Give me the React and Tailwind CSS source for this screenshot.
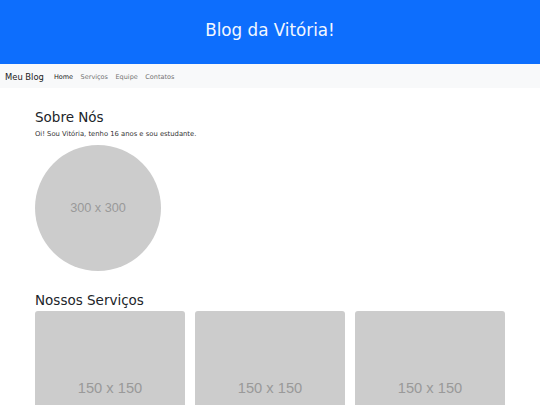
import React from 'react';

const dejavu = { fontFamily: '"DejaVu Sans", sans-serif' };

// --- Placeholder box (like placeholder.com images) ---
const Placeholder = ({ label, className }) => (
    <div className={`flex items-center justify-center bg-[#cccccc] text-[#999999] font-['Liberation_Sans',Arial,sans-serif] ${className}`}>
        {label}
    </div>
);

const App = () => {
    const links = ['Home', 'Serviços', 'Equipe', 'Contatos'];

    return (
        <div className="min-h-[405px] bg-white text-[#212529]" style={dejavu}>
            {/* --- Header --- */}
            <header className="h-16 bg-[#0d6efd] flex items-center justify-center pb-[3px]">
                <h1 className="text-[16.75px] text-[#f2f7ff] font-normal">Blog da Vitória!</h1>
            </header>

            {/* --- Navbar --- */}
            <nav className="h-6 bg-[#f8f9fa] flex items-center pt-[3px] pl-[5px]">
                <span className="text-[8.4px] text-[#1a1a1a] mr-[10px]">Meu Blog</span>
                <div className="flex gap-[7.5px]">
                    {links.map((link, i) => (
                        <span key={link} className={`text-[6.5px] ${i === 0 ? 'text-[#1a1a1a]' : 'text-[#737373]'}`}>{link}</span>
                    ))}
                </div>
            </nav>

            {/* --- Content --- */}
            <main className="w-[470px] mx-auto">
                <section className="pt-[21.5px]">
                    <h2 className="text-[13.5px] leading-[15px] font-normal mb-[4px]">Sobre Nós</h2>
                    <p className="text-[6.8px] leading-[10px] text-[#333]">Oi! Sou Vitória, tenho 16 anos e sou estudante.</p>
                    <Placeholder label="300 x 300" className="mt-[6px] w-[126px] h-[126px] rounded-full text-[12.7px] pt-[2px]" />
                </section>

                <section className="pt-[22px]">
                    <h2 className="text-[13.5px] leading-[15px] font-normal mb-[3px]">Nossos Serviços</h2>
                    <div className="flex gap-[10px]">
                        {[1, 2, 3].map(n => (
                            <Placeholder key={n} label="150 x 150" className="w-[150px] h-[150px] rounded-[3px] text-[14.7px] pt-[5px]" />
                        ))}
                    </div>
                </section>
            </main>
        </div>
    );
};

export default App;
